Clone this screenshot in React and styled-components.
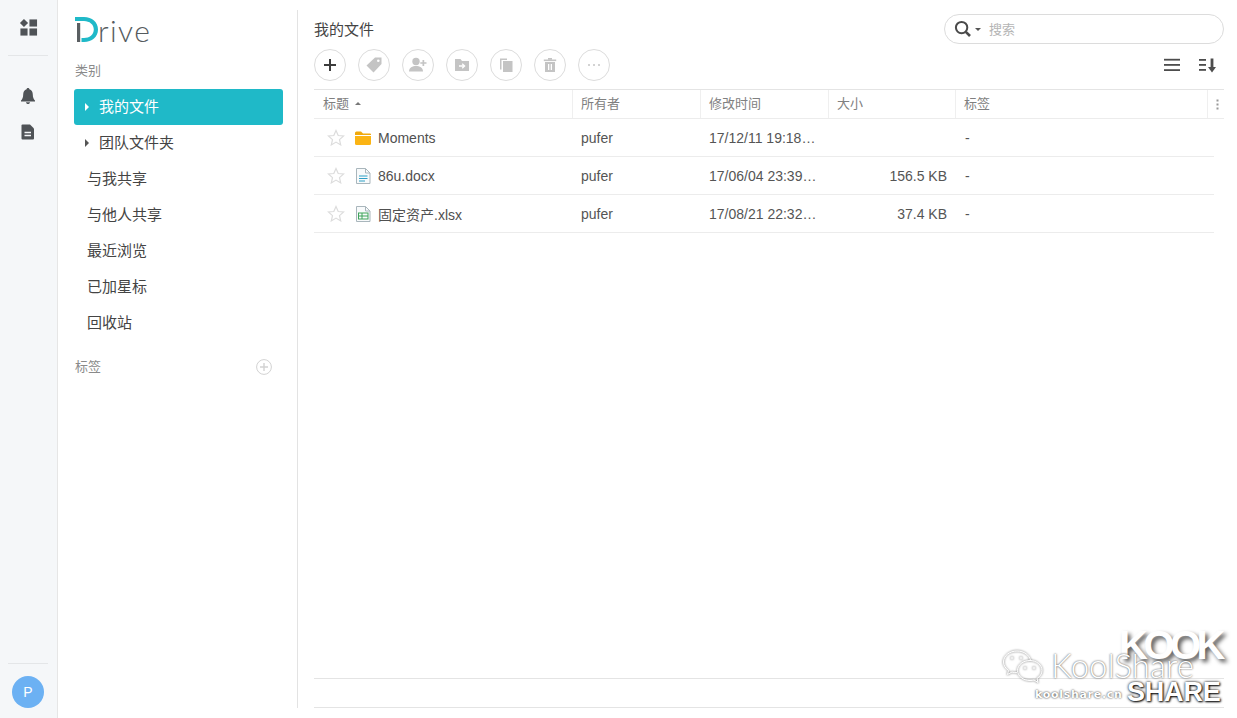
import React from "react";
import styled, { createGlobalStyle } from "styled-components";

const Global = createGlobalStyle`
  html, body { margin: 0; padding: 0; height: 100%; background: #fff; }
  body { font-family: "Liberation Sans", "Noto Sans CJK SC", sans-serif; color: #404040; }
  * { box-sizing: border-box; }
`;

const Page = styled.div`
  position: relative;
  display: flex;
  width: 100%;
  height: 100vh;
  overflow: hidden;
  background: #fff;
`;

const Rail = styled.aside`
  width: 58px;
  flex: none;
  display: flex;
  flex-direction: column;
  align-items: center;
  padding-right: 1px;
  background: #f5f7f9;
  border-right: 1px solid #e6e6e6;
`;
const RailTop = styled.div`
  height: 56px;
  width: 40px;
  display: flex;
  align-items: center;
  justify-content: center;
  border-bottom: 1px solid #e4e6e8;
`;
const RailIcons = styled.div`
  display: flex;
  flex-direction: column;
  gap: 18px;
  padding-top: 31px;
  flex: 1;
`;
const RailBottom = styled.div`
  width: 40px;
  height: 55px;
  border-top: 1px solid #e4e6e8;
  display: flex;
  justify-content: center;
  padding-top: 12px;
`;
const Avatar = styled.div`
  width: 32px;
  height: 32px;
  border-radius: 50%;
  background: #6cb1f3;
  color: #fff;
  font-size: 14px;
  display: flex;
  align-items: center;
  justify-content: center;
`;

const Sidebar = styled.nav`
  width: 240px;
  flex: none;
  margin: 10px 0;
  padding: 7px 14px 0 16px;
  border-right: 1px solid #e3e3e3;
  display: flex;
  flex-direction: column;
`;
const Logo = styled.div`
  display: flex;
  align-items: flex-end;
  height: 25px;
  margin-left: 1px;
`;
const LogoText = styled.span`
  font-family: Lato, sans-serif;
  font-weight: 300;
  font-size: 30px;
  line-height: 25px;
  letter-spacing: 1.4px;
  color: #555b5e;
  margin-left: -1px;
  position: relative;
  top: 1px;
`;
const SectionLabel = styled.div`
  display: flex;
  justify-content: space-between;
  align-items: center;
  font-size: 13px;
  color: #8a8a8a;
  height: 20px;
  padding: 0 11px 0 1px;
  margin-top: ${(p) => p.$top}px;
  margin-bottom: ${(p) => p.$bottom || 0}px;
`;
const LabelText = styled.span`
  padding-bottom: 4px;
`;
const NavItem = styled.div`
  height: 36px;
  display: flex;
  align-items: center;
  font-size: 15px;
  border-radius: 3px;
  padding-left: ${(p) => (p.$nested ? 11 : 13)}px;
  background: ${(p) => (p.$active ? "#1fb9c8" : "transparent")};
  color: ${(p) => (p.$active ? "#fff" : "#444")};
`;
const NavText = styled.span`
  padding-bottom: 3px;
`;
const Caret = styled.span`
  width: 0;
  height: 0;
  border-left: 4px solid ${(p) => (p.$active ? "#fff" : "#555")};
  border-top: 4px solid transparent;
  border-bottom: 4px solid transparent;
  margin-right: 10px;
`;
const PlusCircle = styled.span`
  width: 16px;
  height: 16px;
  display: flex;
`;

const Main = styled.main`
  flex: 1;
  min-width: 0;
  padding: 14px 13px 10px 16px;
  display: flex;
  flex-direction: column;
`;
const TitleBar = styled.div`
  height: 30px;
  display: flex;
  align-items: center;
  justify-content: space-between;
`;
const Title = styled.h1`
  margin: 0;
  font-size: 15px;
  font-weight: 400;
  color: #444;
  padding-bottom: 2px;
`;
const Search = styled.div`
  width: 280px;
  height: 30px;
  border: 1px solid #dcdcdc;
  border-radius: 15px;
  display: flex;
  align-items: center;
  padding-left: 9px;
  font-size: 13px;
  color: #b5b5b5;
`;
const SearchText = styled.span`
  padding-bottom: 2px;
`;
const SearchCaret = styled.span`
  width: 0;
  height: 0;
  border-top: 3px solid #555;
  border-left: 3px solid transparent;
  border-right: 3px solid transparent;
  margin: 1px 8px 0 3px;
`;
const Toolbar = styled.div`
  display: flex;
  align-items: center;
  justify-content: space-between;
  margin-top: 5px;
  height: 32px;
`;
const ToolGroup = styled.div`
  display: flex;
  gap: 12px;
`;
const ToolButton = styled.button`
  width: 32px;
  height: 32px;
  padding: 0;
  border: 1px solid #dcdcdc;
  border-radius: 50%;
  background: #fff;
  display: flex;
  align-items: center;
  justify-content: center;
`;
const ViewGroup = styled.div`
  display: flex;
  gap: 19px;
  align-items: center;
  margin-right: 8px;
`;

const HeaderRow = styled.div`
  display: grid;
  grid-template-columns: 259px 128px 128px 127px 252px 1fr;
  height: 30px;
  margin-top: 8px;
  border-top: 1px solid #e4e4e4;
  border-bottom: 1px solid #ececec;
`;
const HeadCell = styled.div`
  display: flex;
  align-items: center;
  padding-left: ${(p) => p.$pad || 8}px;
  font-size: 13px;
  color: #808080;
  border-right: ${(p) => (p.$last ? "none" : "1px solid #efefef")};
`;
const HeadText = styled.span`
  padding-bottom: 4px;
`;
const SortUp = styled.span`
  width: 0;
  height: 0;
  border-bottom: 3px solid #777;
  border-left: 3px solid transparent;
  border-right: 3px solid transparent;
  margin-left: 6px;
  margin-bottom: 2px;
`;
const Rows = styled.div`
  width: 900px;
  flex: 1;
`;
const Row = styled.div`
  display: grid;
  grid-template-columns: 259px 128px 128px 127px 1fr;
  height: 38px;
  align-items: center;
  border-bottom: 1px solid #ececec;
  font-size: 14px;
  color: #555;
`;
const NameCell = styled.div`
  display: flex;
  align-items: center;
  padding-left: 13px;
`;
const NameText = styled.span`
  margin-left: 6px;
  color: #505050;
`;
const IconSlot = styled.span`
  width: 18px;
  margin-left: 9px;
  display: flex;
  justify-content: center;
`;
const Cell = styled.div`
  padding-left: ${(p) => p.$pad ?? 8}px;
  padding-right: ${(p) => p.$right || 0}px;
  text-align: ${(p) => p.$align || "left"};
  white-space: nowrap;
`;
const Footer = styled.div`
  height: 30px;
  border-top: 1px solid #e4e4e4;
  border-bottom: 1px solid #e4e4e4;
`;

const Watermark = styled.div`
  position: absolute;
  right: 0;
  bottom: 0;
  width: 240px;
  height: 95px;
  pointer-events: none;
  color: #fff;
`;
const MarkKool = styled.span`
  position: absolute;
  left: 122px;
  top: 2px;
  font-family: "Liberation Sans", sans-serif;
  font-weight: 700;
  font-size: 40px;
  line-height: 40px;
  letter-spacing: -4.5px;
  text-shadow: 3px 3px 4px rgba(0, 0, 0, 0.65);
`;
const MarkName = styled.span`
  position: absolute;
  left: 54px;
  top: 26px;
  font-family: Lato, sans-serif;
  font-weight: 300;
  font-size: 33px;
  line-height: 32px;
  text-shadow: 0 0 2px rgba(0, 0, 0, 0.8);
`;
const MarkSite = styled.span`
  position: absolute;
  left: 38px;
  top: 65px;
  font-family: "DejaVu Sans", sans-serif;
  font-weight: 700;
  font-size: 11px;
  line-height: 14px;
  letter-spacing: 0.7px;
  text-shadow: 0 0 2px rgba(0, 0, 0, 0.95);
`;
const MarkShare = styled.span`
  position: absolute;
  left: 130px;
  top: 55px;
  font-family: "Liberation Sans", sans-serif;
  font-weight: 700;
  font-size: 27px;
  line-height: 28px;
  letter-spacing: -0.2px;
  text-shadow: 0 0 3px rgba(0, 0, 0, 1), 1px 1px 2px rgba(0, 0, 0, 0.9);
`;
const MarkIcon = styled.span`
  position: absolute;
  left: 5px;
  top: 26px;
  display: flex;
`;

const GridIcon = () => (
  <svg width="19" height="19" viewBox="0 0 20 20" fill="#4f5357">
    <path d="M5.2 1 L9.6 5.2 L5.2 9.4 L1 5.2 Z" />
    <rect x="11" y="1.5" width="8" height="7.5" />
    <rect x="1.5" y="11" width="7.5" height="7.5" />
    <rect x="11" y="11" width="8" height="7.5" />
  </svg>
);
const BellIcon = () => (
  <svg width="18" height="18" viewBox="0 0 18 18" fill="#4f5357">
    <path d="M9 1 C10 1 10.4 1.6 10.4 2.3 C12.8 3 13.8 5 13.8 7.5 C13.8 10.5 14.6 12 16 13.6 L16 14.4 L2 14.4 L2 13.6 C3.4 12 4.2 10.5 4.2 7.5 C4.2 5 5.2 3 7.6 2.3 C7.6 1.6 8 1 9 1 Z" />
    <path d="M7 15.2 H11 C11 16.4 10 17 9 17 C8 17 7 16.4 7 15.2 Z" />
  </svg>
);
const DocIcon = () => (
  <svg width="18" height="18" viewBox="0 0 18 18">
    <path d="M3.5 1.5 H11 L15 5.5 V15.5 Q15 16.5 14 16.5 H3.5 Q2.5 16.5 2.5 15.5 V2.5 Q2.5 1.5 3.5 1.5 Z" fill="#4f5357" />
    <path d="M5.5 9.5 H12 M5.5 12.5 H12" stroke="#f5f7f9" strokeWidth="1.3" />
  </svg>
);
const DriveMark = () => (
  <svg width="24" height="25" viewBox="0 0 24 25">
    <path d="M0 0 H9 C17 0 23 5 23 12.5 C23 20 17 25 9 25 H6.5 V21 H9 C14.5 21 18.8 17.5 18.8 12.5 C18.8 7.5 14.5 4 9 4 H0 Z" fill="#1fb9c8" />
    <rect x="2" y="6" width="3.2" height="19" fill="#5a5f62" />
  </svg>
);
const CirclePlus = () => (
  <svg width="16" height="16" viewBox="0 0 16 16" fill="none" stroke="#d2d2d2">
    <circle cx="8" cy="8" r="7.4" />
    <path d="M8 4 V12 M4 8 H12" strokeWidth="1.4" />
  </svg>
);
const SearchIcon = () => (
  <svg width="18" height="18" viewBox="0 0 18 18" fill="none" stroke="#4a4a4a">
    <circle cx="7.6" cy="7.6" r="5.7" strokeWidth="2" />
    <path d="M11.8 11.8 L16 16" strokeWidth="2.6" />
  </svg>
);

const grey = "#c4c4c4";
const PlusIcon = () => (
  <svg width="14" height="14" viewBox="0 0 14 14" stroke="#3c3c3c" strokeWidth="2">
    <path d="M7 1 V13 M1 7 H13" />
  </svg>
);
const TagIcon = () => (
  <svg width="18" height="18" viewBox="0 0 18 18">
    <path d="M10 1.5 H16.5 V8 L8.5 16.5 L1.5 9.5 Z" fill={grey} />
    <circle cx="13.3" cy="4.8" r="1.3" fill="#fff" />
  </svg>
);
const UserPlusIcon = () => (
  <svg width="20" height="18" viewBox="0 0 20 18" fill={grey}>
    <circle cx="8" cy="5.5" r="3.7" />
    <path d="M1 15.5 C1 11.5 4.5 10 8 10 C11.5 10 15 11.5 15 15.5 Z" />
    <path d="M14.5 4 H16.2 V6.2 H18.5 V7.8 H16.2 V10 H14.5 V7.8 H12.3 V6.2 H14.5 Z" />
  </svg>
);
const MoveIcon = () => (
  <svg width="16" height="16" viewBox="0 0 16 16">
    <path d="M1 2 H6.5 L8 4 H15 V14 H1 Z" fill={grey} />
    <path d="M5 9 H10 M8.2 6.8 L10.6 9 L8.2 11.2" stroke="#fff" strokeWidth="1.3" fill="none" />
  </svg>
);
const CopyIcon = () => (
  <svg width="16" height="16" viewBox="0 0 16 16" fill={grey}>
    <path d="M2 1.5 H9 V3 H3.5 V12.5 H2 Z" />
    <rect x="5" y="4" width="9.5" height="11" />
  </svg>
);
const TrashIcon = () => (
  <svg width="16" height="16" viewBox="0 0 16 16" fill={grey}>
    <rect x="1.8" y="2.5" width="12.4" height="1.6" />
    <rect x="6" y="1" width="4" height="1.8" />
    <path d="M3 5 H13 V15 H3 Z M6 7 V13 H7.3 V7 Z M8.7 7 V13 H10 V7 Z" fillRule="evenodd" />
  </svg>
);
const DotsIcon = () => (
  <svg width="16" height="4" viewBox="0 0 16 4" fill={grey}>
    <circle cx="3" cy="2" r="1" />
    <circle cx="8" cy="2" r="1" />
    <circle cx="13" cy="2" r="1" />
  </svg>
);
const ListIcon = () => (
  <svg width="16" height="14" viewBox="0 0 16 14" fill="#4d4d4d">
    <rect y="0.8" width="16" height="1.8" />
    <rect y="6" width="16" height="1.8" />
    <rect y="11.2" width="16" height="1.8" />
  </svg>
);
const SortIcon = () => (
  <svg width="17" height="15" viewBox="0 0 17 15" fill="#4d4d4d">
    <rect y="1" width="7" height="1.8" />
    <rect y="6" width="7" height="1.8" />
    <rect y="11" width="7" height="1.8" />
    <rect x="11.6" y="0.5" width="2.8" height="9" />
    <path d="M9 9 H17 L13 14.5 Z" />
  </svg>
);
const KebabIcon = () => (
  <svg width="3" height="11" viewBox="0 0 3 11" fill="#999">
    <rect x="0.5" y="0.5" width="2" height="2" />
    <rect x="0.5" y="4.5" width="2" height="2" />
    <rect x="0.5" y="8.5" width="2" height="2" />
  </svg>
);
const StarIcon = () => (
  <svg width="18" height="17" viewBox="0 0 18 17" fill="none" stroke="#dcdcdc" strokeWidth="1.2">
    <path d="M9 1.5 L11.2 6.5 L16.6 7 L12.5 10.6 L13.7 15.9 L9 13.1 L4.3 15.9 L5.5 10.6 L1.4 7 L6.8 6.5 Z" />
  </svg>
);
const FolderIcon = () => (
  <svg width="18" height="16" viewBox="0 0 18 16">
    <path d="M1 3 Q1 1.5 2.5 1.5 H7 L9 3.5 H16 Q17 3.5 17 4.5 V5 H1 Z" fill="#f0a90c" />
    <path d="M1 6 H17 V13.5 Q17 15 15.5 15 H2.5 Q1 15 1 13.5 Z" fill="#fbb414" />
  </svg>
);
const WordIcon = () => (
  <svg width="16" height="16" viewBox="0 0 16 16" fill="none">
    <path d="M1.5 0.5 H10.5 L15 5 V15.5 H1.5 Z" fill="#f8fafb" stroke="#a9b6bc" />
    <path d="M10.5 0.5 V5 H15" stroke="#a9b6bc" />
    <path d="M4 8 H12.5 M4 10.5 H12.5 M4 13 H10" stroke="#2f9fc6" strokeWidth="1.1" />
  </svg>
);
const SheetIcon = () => (
  <svg width="16" height="16" viewBox="0 0 16 16" fill="none">
    <path d="M1.5 0.5 H10.5 L15 5 V15.5 H1.5 Z" fill="#f8fafb" stroke="#a9b6bc" />
    <path d="M10.5 0.5 V5 H15" stroke="#a9b6bc" />
    <rect x="3.5" y="7" width="9.5" height="6" stroke="#3ea35a" />
    <path d="M3.5 10 H13 M7 7 V13" stroke="#3ea35a" />
  </svg>
);
const WeChatIcon = () => (
  <svg width="44" height="36" viewBox="0 0 44 36" fill="none" stroke="#fff" strokeWidth="1" style={{ filter: "drop-shadow(0 0 1px rgba(0,0,0,.7))" }}>
    <path d="M15 2 C7.5 2 1.5 6.8 1.5 13 C1.5 16.5 3.5 19.3 6.5 21.5 L5.5 25.5 L10 23 C11.5 23.5 13 23.7 15 23.7" />
    <path d="M15 2 C22 2 27.5 6 28.5 11.5" />
    <path d="M28 11.5 C21 11.5 15.5 16 15.5 21.5 C15.5 27 21 31.5 28 31.5 C29.5 31.5 31 31.3 32 31 L36 33.5 L35 29.5 C38 27.5 40 25 40 21.5 C40 16 34.5 11.5 28 11.5 Z" />
    <circle cx="10" cy="9" r="1" />
    <circle cx="19" cy="9" r="1" />
    <circle cx="23" cy="19" r="1" />
    <circle cx="32" cy="19" r="1" />
  </svg>
);

const nav = [
  { label: "我的文件", nested: true, active: true },
  { label: "团队文件夹", nested: true },
  { label: "与我共享" },
  { label: "与他人共享" },
  { label: "最近浏览" },
  { label: "已加星标" },
  { label: "回收站" },
];
const tools = [PlusIcon, TagIcon, UserPlusIcon, MoveIcon, CopyIcon, TrashIcon, DotsIcon];
const columns = ["所有者", "修改时间", "大小", "标签"];
const files = [
  { name: "Moments", Icon: FolderIcon, time: "17/12/11 19:18…", size: "" },
  { name: "86u.docx", Icon: WordIcon, time: "17/06/04 23:39…", size: "156.5 KB" },
  { name: "固定资产.xlsx", Icon: SheetIcon, time: "17/08/21 22:32…", size: "37.4 KB" },
];

export default function App() {
  return (
    <Page>
      <Global />
      <Rail>
        <RailTop>
          <GridIcon />
        </RailTop>
        <RailIcons>
          <BellIcon />
          <DocIcon />
        </RailIcons>
        <RailBottom>
          <Avatar>P</Avatar>
        </RailBottom>
      </Rail>

      <Sidebar>
        <Logo>
          <DriveMark />
          <LogoText>rive</LogoText>
        </Logo>
        <SectionLabel $top={19} $bottom={8}>
          <LabelText>类别</LabelText>
        </SectionLabel>
        {nav.map((item) => (
          <NavItem key={item.label} $nested={item.nested} $active={item.active}>
            {item.nested && <Caret $active={item.active} />}
            <NavText>{item.label}</NavText>
          </NavItem>
        ))}
        <SectionLabel $top={16}>
          <LabelText>标签</LabelText>
          <PlusCircle>
            <CirclePlus />
          </PlusCircle>
        </SectionLabel>
      </Sidebar>

      <Main>
        <TitleBar>
          <Title>我的文件</Title>
          <Search>
            <SearchIcon />
            <SearchCaret />
            <SearchText>搜索</SearchText>
          </Search>
        </TitleBar>
        <Toolbar>
          <ToolGroup>
            {tools.map((Icon, i) => (
              <ToolButton key={i}>
                <Icon />
              </ToolButton>
            ))}
          </ToolGroup>
          <ViewGroup>
            <ListIcon />
            <SortIcon />
          </ViewGroup>
        </Toolbar>
        <HeaderRow>
          <HeadCell $pad={9}>
            <HeadText>标题</HeadText>
            <SortUp />
          </HeadCell>
          {columns.map((c) => (
            <HeadCell key={c}>
              <HeadText>{c}</HeadText>
            </HeadCell>
          ))}
          <HeadCell $last>
            <KebabIcon />
          </HeadCell>
        </HeaderRow>
        <Rows>
          {files.map(({ name, Icon, time, size }) => (
            <Row key={name}>
              <NameCell>
                <StarIcon />
                <IconSlot>
                  <Icon />
                </IconSlot>
                <NameText>{name}</NameText>
              </NameCell>
              <Cell>pufer</Cell>
              <Cell>{time}</Cell>
              <Cell $pad={0} $right={9} $align="right">{size}</Cell>
              <Cell $pad={9}>-</Cell>
            </Row>
          ))}
        </Rows>
        <Footer />
      </Main>

      <Watermark>
        <MarkIcon>
          <WeChatIcon />
        </MarkIcon>
        <MarkKool>KOOK</MarkKool>
        <MarkName>KoolShare</MarkName>
        <MarkSite>koolshare.cn</MarkSite>
        <MarkShare>SHARE</MarkShare>
      </Watermark>
    </Page>
  );
}
